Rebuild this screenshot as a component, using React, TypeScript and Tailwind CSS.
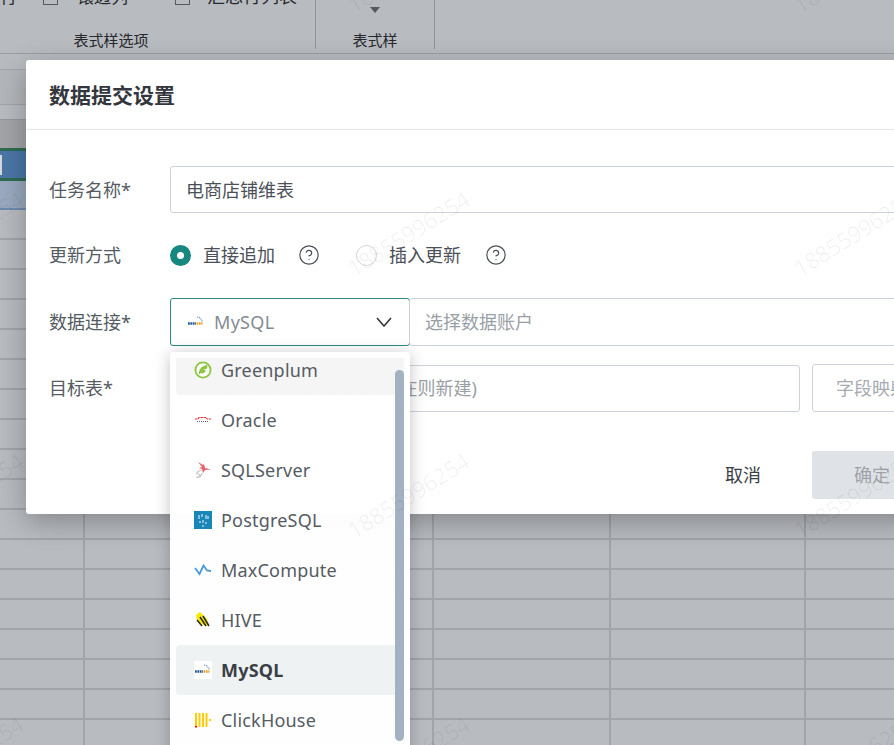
import { CircleHelp } from "lucide-react"

const dbList = ["Greenplum", "Oracle", "SQLServer", "PostgreSQL", "MaxCompute", "HIVE", "MySQL", "ClickHouse"]
const rowKeys = Array.from({ length: 18 }, (_, i) => i)
const marks = Array.from({ length: 12 }, (_, i) => i)

function DbIcon({ name }: { name: string }) {
  if (name === "Greenplum") {
    return (
      <svg width="18" height="18" viewBox="0 0 18 18">
        <circle cx="9" cy="9" r="7.6" fill="#fff" stroke="#8cc63f" strokeWidth="1.8" />
        <path d="M5 13.500 C4.500 8 8 4.500 13.500 4 C13.500 6 13 7 12.500 8 L9 8.600 L11.800 9.200 C10.800 12 8.500 13 6.800 12 Z" fill="#8cc63f" />
      </svg>
    )
  }
  if (name === "Oracle") {
    return (
      <svg width="18" height="18" viewBox="0 0 18 18">
        <path d="M1 8h3l1-1.500h7l1 1.500h4" stroke="#e0343a" strokeWidth="1.200" fill="none" strokeDasharray="2.500 0.600" />
        <path d="M3 10.500h12" stroke="#7a5a5a" strokeWidth="1.200" strokeDasharray="1 1" />
      </svg>
    )
  }
  if (name === "SQLServer") {
    return (
      <svg width="18" height="18" viewBox="0 0 18 18">
        <path d="M4 1l5 3 1-1 1 4 6 1.500-6 .5-2 3-1-4-3-1 3-1z" fill="#e4474c" opacity="0.85" />
        <path d="M2 13c2-3 4-4 6-4M2 16c3 1 5-1 6-4M3 11l4 5" stroke="#c4c4c4" strokeWidth="1.200" fill="none" />
      </svg>
    )
  }
  if (name === "PostgreSQL") {
    return (
      <svg width="18" height="18" viewBox="0 0 18 18">
        <rect width="18" height="18" fill="#1a86b8" />
        <path d="M5 4v4M8 3v3M12 4v4M14 5v3M6 10v2M9 9v3M12 11v2M9 14v2" stroke="#cfe6f2" strokeWidth="1.200" />
      </svg>
    )
  }
  if (name === "MaxCompute") {
    return (
      <svg width="18" height="18" viewBox="0 0 18 18">
        <path d="M1 7l4.500 6 4-8.500 3.500 5 4 .5" stroke="#4a9ad8" strokeWidth="1.800" fill="none" />
      </svg>
    )
  }
  if (name === "HIVE") {
    return (
      <svg width="18" height="18" viewBox="0 0 18 18">
        <path d="M2 4l4-3 7 7 2 7-6-1-6-5z" fill="#f5e800" />
        <path d="M6 6l6 9M9 5l6 10M3 9l5 6" stroke="#2b2b1a" strokeWidth="1.500" fill="none" />
      </svg>
    )
  }
  if (name === "MySQL") {
    return (
      <svg width="18" height="18" viewBox="0 0 18 18">
        <rect width="18" height="18" fill="#fff" rx="1" />
        <path d="M1 10.500h8" stroke="#1f5a96" strokeWidth="2.400" strokeDasharray="1.800 0.600" />
        <path d="M9.500 10.500h6" stroke="#f0a030" strokeWidth="2.400" strokeDasharray="1.800 0.600" />
        <path d="M10 4c2.500 0 4.500 2 5.500 5" stroke="#5f86ad" strokeWidth="1.100" fill="none" strokeDasharray="1.200 0.800" />
      </svg>
    )
  }
  return (
    <svg width="18" height="18" viewBox="0 0 18 18">
      <path d="M2 2v14M5.500 2v14M9 2v14M12.500 2v14" stroke="#fc0" strokeWidth="2" />
      <path d="M16 8v2" stroke="#fc0" strokeWidth="2" />
      <rect x="1" y="15" width="2" height="1.500" fill="#f00" />
    </svg>
  )
}

function Ribbon() {
  return (
    <div className="flex h-[54px] border-b border-[#9a9da3] bg-[#b8bbc0] text-[#26282b]">
      <div className="flex h-[49px] w-[316px] flex-col border-r border-[#8f949c]">
        <div className="flex h-[5px] items-end overflow-hidden text-[17px] leading-[17px]">
          <span className="w-[43px] shrink-0">行</span>
          <span className="h-[15px] w-[15px] shrink-0 border border-[#55585c]" />
          <span className="ml-[19px] w-[98px] shrink-0">镶边列</span>
          <span className="h-[15px] w-[15px] shrink-0 border border-[#55585c]" />
          <span className="ml-[17px] shrink-0 text-[18px]">汇总行列表</span>
        </div>
        <div className="mt-[27px] w-[222px] text-center text-[15px] leading-[16px]">表式样选项</div>
      </div>
      <div className="flex h-[49px] w-[119px] flex-col items-center border-r border-[#8f949c]">
        <div className="mt-[7px] h-0 w-0 border-x-[5px] border-t-[6px] border-x-transparent border-t-[#55585c]" />
        <div className="mt-[19px] text-[15px] leading-[16px]">表式样</div>
      </div>
    </div>
  )
}

function Sheet() {
  return (
    <div>
      <div className="h-[16px] border-b border-[#a2a5aa] bg-[#b8bbc0]" />
      <div className="h-[35px] border-b border-[#a2a5aa] bg-[#b3b6ba]" />
      <div className="h-[15px] border-b border-[#95989d] bg-[#b8bbc0]" />
      <div className="h-[28px] bg-[#a2a4a7]" />
      <div className="flex h-[33px] items-center border-y-[3px] border-[#2f6b53] bg-[#4a76a6]">
        <div className="h-[20px] w-[2px] bg-[#d5d8dc]" />
      </div>
      <div className="h-[29px] border-b-2 border-[#6f8bb0] bg-[#9aa9bf]" />
      {rowKeys.map((r) => (
        <div key={r} className="flex h-[30px] border-b-2 border-[#a1a4a9]">
          <div className="w-[85px] border-r-2 border-[#a1a4a9]" />
          <div className="w-[349px] border-r-2 border-[#a1a4a9]" />
          <div className="w-[177px] border-r-2 border-[#a1a4a9]" />
          <div className="w-[195px] border-r-2 border-[#a1a4a9]" />
        </div>
      ))}
    </div>
  )
}

function Field({ label, children }: { label: string; children: React.ReactNode }) {
  return (
    <div className="flex items-center">
      <div className="w-[121px] shrink-0 text-[#555b63]">{label}</div>
      {children}
    </div>
  )
}

function Modal() {
  return (
    <div className="absolute left-[26px] top-[60px] h-[454px] w-[960px] rounded-[3px] bg-white shadow-[0_8px_28px_rgba(0,0,0,0.28)]">
      <div className="flex h-[70px] items-center border-b border-[#e3e5e8] px-[23px] text-[21px] font-bold text-[#33373d]">数据提交设置</div>
      <div className="flex flex-col pl-[23px] pt-[36px]">
        <Field label="任务名称*">
          <div className="flex h-[47px] w-[780px] items-center rounded-[3px] border border-[#ccd2db] pl-[15px] text-[#4b5058]">电商店铺维表</div>
        </Field>
        <div className="mt-[30px]">
          <Field label="更新方式">
            <div className="flex h-[24px] items-center text-[#4b5058]">
              <span className="flex h-[21px] w-[21px] items-center justify-center rounded-full bg-[#17877f]">
                <span className="h-[7px] w-[7px] rounded-full bg-white" />
              </span>
              <span className="ml-3">直接追加</span>
              <CircleHelp size={22} strokeWidth={1.3} className="ml-[23px] text-[#4a4f56]" />
              <span className="ml-[36px] h-[21px] w-[21px] rounded-full border border-[#d0d5dd]" />
              <span className="ml-3">插入更新</span>
              <CircleHelp size={22} strokeWidth={1.3} className="ml-[24px] text-[#4a4f56]" />
            </div>
          </Field>
        </div>
        <div className="mt-[31px]">
          <Field label="数据连接*">
            <div className="flex h-[48px] w-[240px] shrink-0 items-center rounded-[3px] border border-[#2a8a80] pl-4 pr-[17px]">
              <DbIcon name="MySQL" />
              <span className="ml-[9px] flex-1 tracking-[0.3px] text-[#858b94]">MySQL</span>
              <svg width="16" height="10" viewBox="0 0 16 10">
                <path d="M1 1l7 8 7-8" stroke="#33373d" strokeWidth="1.600" fill="none" />
              </svg>
            </div>
            <div className="-ml-px flex h-[48px] w-[600px] items-center rounded-[3px] border border-[#ccd2db] pl-[15px] text-[#9a9fa6]">选择数据账户</div>
          </Field>
        </div>
        <div className="mt-[18px]">
          <Field label="目标表*">
            <div className="flex h-[47px] w-[630px] shrink-0 items-center rounded-[3px] border border-[#ccd2db] pl-4 text-[#9a9fa6]">
              <span className="w-[27px]">
                <span className="block h-[10px] w-[10px] rounded-full border border-[#9a9fa6]" />
              </span>
              <span>请输入目标表名称(不存在则新建)</span>
            </div>
            <div className="ml-3 flex h-[48px] w-[150px] shrink-0 items-center rounded-[3px] border border-[#ccd2db] pl-[23px] text-[#a7abb2]">字段映射</div>
          </Field>
        </div>
        <div className="mt-[39px] flex items-center pl-[676px]">
          <span className="text-[#3a3f46]">取消</span>
          <div className="ml-[51px] flex h-[48px] w-[120px] items-center rounded-[3px] bg-[#dfe2e6] pl-[42px] text-[#9fa3a9]">确定</div>
        </div>
      </div>
    </div>
  )
}

function Dropdown() {
  return (
    <div className="absolute left-[170px] top-[352px] h-[420px] w-[240px] rounded-[4px] bg-white/[.98] p-[6px] shadow-[0_2px_16px_rgba(0,0,0,0.24)]">
      <div className="h-full overflow-hidden">
        <div className="-mt-[13px]">
          {dbList.map((db, i) => (
            <div
              key={db}
              className={`flex h-[50px] items-center rounded-[4px] pl-[18px] ${
                i === 0 ? "bg-[#f5f5f5]" : db === "MySQL" ? "bg-[#eef2f2]" : ""
              }`}
            >
              <DbIcon name={db} />
              <span className={`ml-[9px] tracking-[0.2px] ${db === "MySQL" ? "font-bold text-[#3a3f46]" : "text-[#555b63]"}`}>{db}</span>
            </div>
          ))}
        </div>
      </div>
      <div className="absolute left-[225px] top-[18px] h-[371px] w-[9px] rounded-full bg-[#a2b2c3]" />
    </div>
  )
}

export default function App() {
  return (
    <div className="relative h-[745px] w-[894px] overflow-hidden bg-[#b8bbc0] font-['Noto_Sans','Noto_Sans_CJK_SC',sans-serif] text-[18px] leading-[24px]">
      <Ribbon />
      <Sheet />
      <Modal />
      <Dropdown />
      <div className="pointer-events-none absolute left-[-261px] top-[-161px] grid grid-cols-[repeat(3,446px)] grid-rows-[repeat(4,262.5px)]">
        {marks.map((m) => (
          <div key={m} className="flex items-center justify-center">
            <span className="-rotate-[32deg] text-[22px] font-light text-black/[.07]">18855996254</span>
          </div>
        ))}
      </div>
    </div>
  )
}
